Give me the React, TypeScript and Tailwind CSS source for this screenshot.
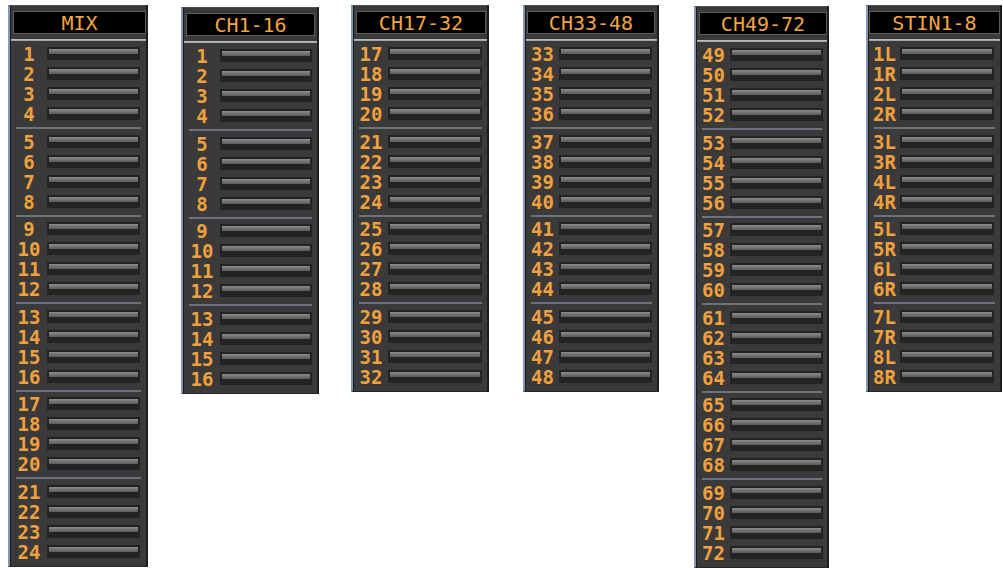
import React from "react";

type Panel = {
  title: string;
  labels: string[];
  box: string; // width + outer offsets
  labelCol: string;
  barPad: string;
  head: string;
};

const range = (a: number, b: number) =>
  Array.from({ length: b - a + 1 }, (_, i) => String(a + i));

const stin = ["1L", "1R", "2L", "2R", "3L", "3R", "4L", "4R", "5L", "5R", "6L", "6R", "7L", "7R", "8L", "8R"];

const panels: Panel[] = [
  { title: "MIX", labels: range(1, 24), box: "w-[140px] ml-[8px] mt-[5px]", labelCol: "w-[36px]", barPad: "pr-[6px]", head: "ml-[2px] mr-0" },
  { title: "CH1-16", labels: range(1, 16), box: "w-[138px] ml-[33px] mt-[7px]", labelCol: "w-[36px]", barPad: "pr-[5px]", head: "ml-[2px] mr-[2px]" },
  { title: "CH17-32", labels: range(17, 32), box: "w-[138px] ml-[32px] mt-[5px]", labelCol: "w-[34px]", barPad: "pr-[5px]", head: "ml-[2px] mr-[1px]" },
  { title: "CH33-48", labels: range(33, 48), box: "w-[136px] ml-[34px] mt-[5px]", labelCol: "w-[33px]", barPad: "pr-[5px]", head: "ml-[1px] mr-[2px]" },
  { title: "CH49-72", labels: range(49, 72), box: "w-[135px] ml-[35px] mt-[6px]", labelCol: "w-[33px]", barPad: "pr-[4px]", head: "ml-[2px] mr-0" },
  { title: "STIN1-8", labels: stin, box: "w-[136px] ml-[37px] mt-[5px]", labelCol: "w-[31px]", barPad: "pr-[6px]", head: "ml-0 mr-0" },
];

function Row({ label, labelCol, barPad }: { label: string; labelCol: string; barPad: string }) {
  return (
    <div className={`flex items-start h-[20px] ${barPad}`}>
      <div className={`${labelCol} text-center text-[19px] leading-[14px] font-bold text-[#f0a03c] tracking-[0px]`}>
        {label}
      </div>
      <div className="flex-1 h-[13px] bg-[#232323] pt-[2px] px-[2px]">
        <div className="h-[5px] bg-linear-to-b from-[#8c8c8c] via-[#727272] to-[#5a5a5a]" />
      </div>
    </div>
  );
}

function Strip({ p }: { p: Panel }) {
  const groups: string[][] = [];
  for (let i = 0; i < p.labels.length; i += 4) groups.push(p.labels.slice(i, i + 4));
  return (
    <div className={`${p.box} shrink-0 border-l-2 border-l-[#8598b1] border-r-2 border-r-[#1d1d1d] border-t border-t-[#4e4e4e] border-b border-b-[#262626]`}>
      <div className="border-l border-l-[#161a1f] bg-[#3a3a3a] pt-[5px] pb-[1px]">
        <div className={`${p.head} h-[23px] bg-black border border-[#5c5c5c] flex items-center justify-center text-[20px] leading-none text-[#f2a542]`}>
          {p.title}
        </div>
        <div className="mt-[5px] h-[2px] bg-linear-to-b from-[#c4c4c4] to-[#9a9a9a]" />
        <div className="pt-[6px]">
          {groups.map((g, gi) => (
            <div key={gi}>
              {gi > 0 && (
                <div className="h-[7.5px] px-[5px]">
                  <div className="h-[2px] bg-[#6c737b]" />
                </div>
              )}
              {g.map((l) => (
                <Row key={l} label={l} labelCol={p.labelCol} barPad={p.barPad} />
              ))}
            </div>
          ))}
        </div>
      </div>
    </div>
  );
}

export default function App() {
  return (
    <div className="w-[1003px] h-[568px] overflow-hidden bg-white flex items-start font-['DejaVu_Sans_Mono',monospace]">
      {panels.map((p) => (
        <Strip key={p.title} p={p} />
      ))}
    </div>
  );
}
